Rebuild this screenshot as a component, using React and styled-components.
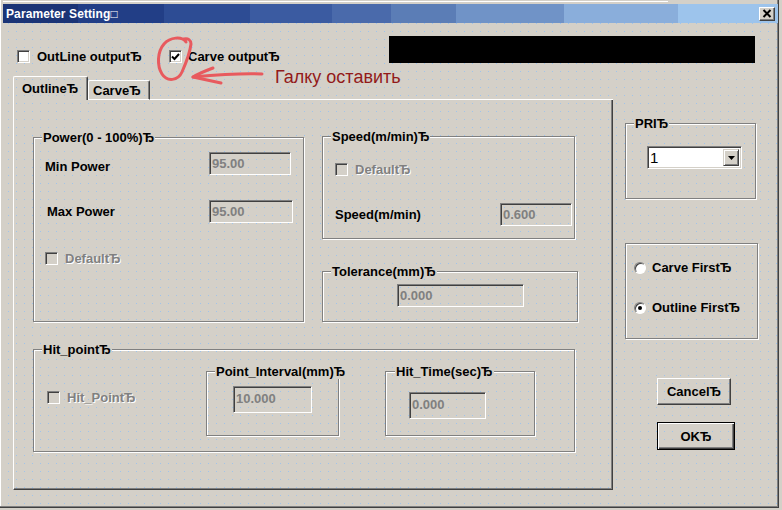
import React from "react";
import styled, { createGlobalStyle } from "styled-components";

const GlobalStyle = createGlobalStyle`
  html, body {
    margin: 0;
    padding: 0;
    background: #d4d0c8;
  }
  body {
    font-family: "Liberation Sans", Arial, sans-serif;
    font-size: 13px;
    font-weight: bold;
    color: #000;
  }
`;

const Screen = styled.div`
  width: 782px;
  height: 510px;
  overflow: hidden;
  display: flex;
  background: #d4d0c8;
`;

const Dialog = styled.div`
  position: relative;
  box-sizing: border-box;
  width: 779px;
  height: 508px;
  display: flex;
  flex-direction: column;
  border-right: 1px solid #404040;
  border-bottom: 1px solid #404040;
  box-shadow: inset -1px -1px 0 #808080, inset 1px 0 0 #fff;
  background-color: #d4d0c8;
  background-image: conic-gradient(at 1px 1px, transparent 75%, #9fc4ec 0);
  background-size: 8px 8px;
  background-position: 0 7px;
`;

const TopEdge = styled.div`
  height: 4px;
  .line {
    margin: 1px 0 0 3px;
    width: 665px;
    height: 1px;
    background: #fff;
  }
`;

const TitleBar = styled.div`
  margin-left: 3px;
  height: 19px;
  display: flex;
  align-items: center;
  justify-content: space-between;
  padding: 0 3px 0 3px;
  background: linear-gradient(
    to right,
    #1b3476 0 75px,
    #223e86 75px 161px,
    #2d4c94 161px 247px,
    #3b5ba1 247px 329px,
    #4a6aab 329px 388px,
    #5b7db6 388px 453px,
    #7093c7 453px 561px,
    #8aaedb 561px 675px,
    #9dc4ec 675px
  );
`;

const TitleText = styled.span`
  color: #fff;
  font-size: 12px;
  font-family: "Liberation Sans", "DejaVu Sans", sans-serif;
  letter-spacing: 0.1px;
`;

const CloseBtn = styled.div`
  box-sizing: border-box;
  width: 16px;
  height: 14px;
  display: flex;
  align-items: center;
  justify-content: center;
  background: #d4d0c8;
  border: 1px solid;
  border-color: #fff #404040 #404040 #fff;
  box-shadow: inset -1px -1px 0 #808080;
`;

const HeaderRow = styled.div`
  display: flex;
  align-items: flex-start;
  height: 53px;
`;

const CheckItem = styled.div`
  display: flex;
  align-items: center;
  gap: ${(p) => p.$gap || 7}px;
  margin-left: ${(p) => p.$ml || 0}px;
  margin-top: ${(p) => p.$mt || 0}px;
  width: ${(p) => (p.$w ? `${p.$w}px` : "auto")};
  color: ${(p) => (p.$disabled ? "#808080" : "#000")};
  text-shadow: ${(p) => (p.$disabled ? "1px 1px 0 #fff" : "none")};
  white-space: nowrap;
`;

const Box = styled.span`
  box-sizing: border-box;
  flex: none;
  width: 13px;
  height: 13px;
  display: flex;
  align-items: center;
  justify-content: center;
  border: 1px solid;
  border-color: #808080 #fff #fff #808080;
  box-shadow: inset 1px 1px 0 #404040, inset -1px -1px 0 #d4d0c8;
  background: ${(p) => (p.$disabled ? "#d4d0c8" : "#fff")};
`;

const BlackBar = styled.div`
  margin: 13px 23px 0 auto;
  width: 366px;
  height: 27px;
  background: #000;
`;

const Scribble = styled.svg`
  position: absolute;
  left: 0;
  top: 0;
  pointer-events: none;
`;

const Note = styled.div`
  position: absolute;
  left: 275px;
  top: 65px;
  font-family: "Liberation Sans", Arial, sans-serif;
  font-weight: normal;
  font-size: 18px;
  line-height: 24px;
  color: #921a1a;
  white-space: nowrap;
`;

const MainRow = styled.div`
  flex: 1;
  display: flex;
`;

const LeftCol = styled.div`
  margin-left: 13px;
  width: 600px;
  display: flex;
  flex-direction: column;
`;

const TabStrip = styled.div`
  display: flex;
  align-items: flex-end;
  height: 24px;
`;

const Tab = styled.div`
  box-sizing: border-box;
  width: ${(p) => p.$w}px;
  height: ${(p) => (p.$active ? 24 : 20)}px;
  display: flex;
  align-items: center;
  padding-left: ${(p) => (p.$active ? 8 : 4)}px;
  padding-top: ${(p) => (p.$active ? 0 : 1)}px;
  border-top: 1px solid #fff;
  border-left: 1px solid #fff;
  border-right: 1px solid #404040;
  border-bottom: ${(p) => (p.$active ? "none" : "1px solid #fff")};
  border-radius: 2px 2px 0 0;
  box-shadow: inset -1px 0 0 #808080;
  white-space: nowrap;
`;

const TabFill = styled.div`
  flex: 1;
  border-bottom: 1px solid #fff;
`;

const Panel = styled.div`
  box-sizing: border-box;
  height: 390px;
  padding: 37px 0 0 19px;
  border-left: 1px solid #fff;
  border-right: 1px solid #404040;
  border-bottom: 1px solid #404040;
  box-shadow: inset -1px -1px 0 #808080;
`;

const Row = styled.div`
  display: flex;
  align-items: flex-start;
  margin-top: ${(p) => p.$mt || 0}px;
`;

const Stack = styled.div`
  display: flex;
  flex-direction: column;
  margin-left: ${(p) => p.$ml || 0}px;
  margin-top: ${(p) => p.$mt || 0}px;
`;

const Group = styled.div`
  position: relative;
  box-sizing: border-box;
  flex: none;
  width: ${(p) => p.$w}px;
  height: ${(p) => p.$h}px;
  margin-top: ${(p) => p.$mt || 0}px;
  margin-left: ${(p) => p.$ml || 0}px;
  padding: ${(p) => p.$pad || "0"};
  border: 1px solid #808080;
  box-shadow: inset 1px 1px 0 #fff, 1px 1px 0 #fff;
`;

const Legend = styled.span`
  position: absolute;
  top: -8px;
  left: ${(p) => p.$left || 8}px;
  padding: 0 1px;
  line-height: 15px;
  background: #d4d0c8;
  white-space: nowrap;
`;

const FieldRow = styled.div`
  display: flex;
  align-items: center;
  justify-content: space-between;
  margin-top: ${(p) => p.$mt || 0}px;
`;

const FieldLabel = styled.span`
  margin-left: ${(p) => p.$ml || 0}px;
  padding-top: ${(p) => p.$pt || 0}px;
`;

const Field = styled.div`
  box-sizing: border-box;
  width: ${(p) => p.$w}px;
  height: ${(p) => p.$h || 23}px;
  margin-right: ${(p) => p.$mr || 0}px;
  display: flex;
  align-items: center;
  padding: 0 0 ${(p) => (p.$h > 23 ? 3 : 0)}px 2px;
  border: 1px solid;
  border-color: #808080 #fff #fff #808080;
  box-shadow: inset 1px 1px 0 #404040;
  color: #808080;
`;

const RightCol = styled.div`
  display: flex;
  flex-direction: column;
  margin-left: 12px;
  padding-top: 47px;
`;

const Combo = styled.div`
  box-sizing: border-box;
  width: 95px;
  height: 23px;
  display: flex;
  align-items: stretch;
  padding: 2px;
  background: #fff;
  border: 1px solid;
  border-color: #808080 #fff #fff #808080;
  box-shadow: inset 1px 1px 0 #404040, inset -1px -1px 0 #d4d0c8;
  span {
    flex: 1;
    font-weight: normal;
    font-size: 15px;
    line-height: 17px;
  }
`;

const ComboBtn = styled.div`
  box-sizing: border-box;
  width: 16px;
  display: flex;
  align-items: center;
  justify-content: center;
  background: #d4d0c8;
  border: 1px solid;
  border-color: #d4d0c8 #404040 #404040 #d4d0c8;
  box-shadow: inset 1px 1px 0 #fff, inset -1px -1px 0 #808080;
`;

const RadioItem = styled.div`
  display: flex;
  align-items: center;
  gap: 6px;
  line-height: 15px;
  margin-top: ${(p) => p.$mt || 0}px;
`;

const Radio = styled.span`
  box-sizing: border-box;
  width: 12px;
  height: 12px;
  border-radius: 50%;
  display: flex;
  align-items: center;
  justify-content: center;
  background: #fff;
  border: 1px solid;
  border-color: #808080 #fff #fff #808080;
  box-shadow: inset 1px 1px 0 #404040;
  &::after {
    content: "";
    width: 4px;
    height: 4px;
    border-radius: 50%;
    background: ${(p) => (p.$checked ? "#000" : "transparent")};
  }
`;

const Button = styled.div`
  box-sizing: border-box;
  width: ${(p) => p.$w}px;
  height: ${(p) => p.$h}px;
  margin-left: 32px;
  margin-top: ${(p) => p.$mt}px;
  display: flex;
  align-items: center;
  justify-content: center;
  border: 1px solid;
  border-color: ${(p) => (p.$default ? "#000" : "#fff #404040 #404040 #fff")};
  box-shadow: ${(p) =>
    p.$default
      ? "inset 1px 1px 0 #fff, inset -1px -1px 0 #404040, inset -2px -2px 0 #808080"
      : "inset -1px -1px 0 #808080"};
`;

const Check = ({ checked, disabled, children, ...rest }) => (
  <CheckItem $disabled={disabled} {...rest}>
    <Box $disabled={disabled}>
      {checked && (
        <svg width="9" height="8" viewBox="0 0 9 8">
          <path d="M1 3.5 L3.5 6 L8 1" fill="none" stroke="#000" strokeWidth="2" />
        </svg>
      )}
    </Box>
    <span>{children}</span>
  </CheckItem>
);

export default function App() {
  return (
    <Screen>
      <GlobalStyle />
      <Dialog>
        <TopEdge>
          <div className="line" />
        </TopEdge>
        <TitleBar>
          <TitleText>Parameter Setting{"\u25A1"}</TitleText>
          <CloseBtn>
            <svg width="10" height="9" viewBox="0 0 10 9">
              <path d="M1.5 1 L8.5 8 M8.5 1 L1.5 8" stroke="#000" strokeWidth="2" />
            </svg>
          </CloseBtn>
        </TitleBar>

        <HeaderRow>
          <Check $ml={17} $mt={26} $w={152}>OutLine outputЂ</Check>
          <Check $mt={26} $gap={6} checked>
            Carve outputЂ
          </Check>
          <BlackBar />
        </HeaderRow>

        <MainRow>
          <LeftCol>
            <TabStrip>
              <Tab $w={75} $active>OutlineЂ</Tab>
              <Tab $w={62}>CarveЂ</Tab>
              <TabFill />
            </TabStrip>
            <Panel>
              <Row>
                <Group $w={271} $h={185} $pad="14px 12px 0 11px">
                  <Legend>Power(0 - 100%)Ђ</Legend>
                  <FieldRow>
                    <FieldLabel $pt={5}>Min Power</FieldLabel>
                    <Field $w={82}>95.00</Field>
                  </FieldRow>
                  <FieldRow $mt={25}>
                    <FieldLabel $ml={2}>Max Power</FieldLabel>
                    <Field $w={84} $mr={-2}>95.00</Field>
                  </FieldRow>
                  <Check $mt={28} disabled>DefaultЂ</Check>
                </Group>
                <Stack $ml={18} $mt={-1}>
                  <Group $w={253} $h={103} $pad="25px 2px 0 12px">
                    <Legend>Speed(m/min)Ђ</Legend>
                    <Check disabled>DefaultЂ</Check>
                    <FieldRow $mt={26}>
                      <FieldLabel>Speed(m/min)</FieldLabel>
                      <Field $w={72}>0.600</Field>
                    </FieldRow>
                  </Group>
                  <Group $w={256} $h={51} $mt={32} $pad="12px 0 0 74px">
                    <Legend>Tolerance(mm)Ђ</Legend>
                    <Field $w={127}>0.000</Field>
                  </Group>
                </Stack>
              </Row>
              <Row $mt={27}>
                <Group $w={542} $h={103} $pad="21px 0 0 13px">
                  <Legend>Hit_pointЂ</Legend>
                  <Row>
                    <Check $mt={19} $w={159} disabled>
                      Hit_PointЂ
                    </Check>
                    <Group $w={133} $h={65} $pad="14px 0 0 26px">
                      <Legend>Point_Interval(mm)Ђ</Legend>
                      <Field $w={79} $h={27}>10.000</Field>
                    </Group>
                    <Group $w={150} $h={65} $ml={46} $pad="20px 0 0 23px">
                      <Legend $left={9}>Hit_Time(sec)Ђ</Legend>
                      <Field $w={77} $h={27}>0.000</Field>
                    </Group>
                  </Row>
                </Group>
              </Row>
            </Panel>
          </LeftCol>

          <RightCol>
            <Group $w={131} $h={76} $pad="22px 0 0 21px">
              <Legend>PRIЂ</Legend>
              <Combo>
                <span>1</span>
                <ComboBtn>
                  <svg width="7" height="4" viewBox="0 0 7 4">
                    <path d="M0 0 H7 L3.5 4 Z" fill="#000" />
                  </svg>
                </ComboBtn>
              </Combo>
            </Group>
            <Group $w={133} $h={96} $mt={44} $pad="16px 0 0 8px">
              <RadioItem>
                <Radio />
                <span>Carve FirstЂ</span>
              </RadioItem>
              <RadioItem $mt={25}>
                <Radio $checked />
                <span>Outline FirstЂ</span>
              </RadioItem>
            </Group>
            <Button $w={74} $h={27} $mt={39}>CancelЂ</Button>
            <Button $w={78} $h={28} $mt={17} $default>OKЂ</Button>
          </RightCol>
        </MainRow>

        <Scribble width="300" height="100">
          <g fill="none" stroke="#e85a5e" strokeWidth="3" strokeLinecap="round" strokeLinejoin="round">
            <path d="M186 42 C182 36, 170 37, 164 44 C157 52, 157 66, 162 74 C167 82, 178 81, 182 72 C186 63, 190 52, 191 44 C191 40, 188 38, 184 39" />
            <path d="M262 74 C240 73, 215 75, 193 77" />
            <path d="M213 68 C205 71, 198 74, 193 77 C202 79, 212 81, 221 83" />
          </g>
        </Scribble>
        <Note>Галку оставить</Note>
      </Dialog>
    </Screen>
  );
}
